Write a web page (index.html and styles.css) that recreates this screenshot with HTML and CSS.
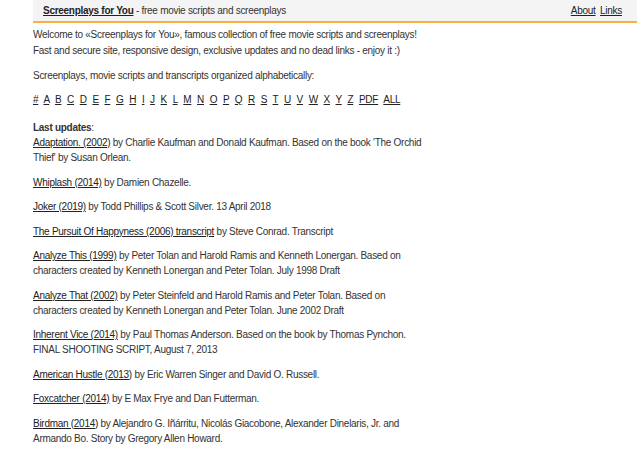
FILE: index.html
```html
<!DOCTYPE html>
<html>
<head>
<meta charset="utf-8">
<link rel="stylesheet" href="styles.css">
</head>
<body>
<div class="page">
  <header class="topbar">
    <div class="brand"><a class="brand-link" href="#">Screenplays for You</a> - free movie scripts and screenplays</div>
    <nav class="toplinks"><a href="#">About</a> <a href="#">Links</a></nav>
  </header>
  <main class="content">
    <p class="intro">Welcome to «Screenplays for You», famous collection of free movie scripts and screenplays!<br>Fast and secure site, responsive design, exclusive updates and no dead links - enjoy it :)</p>
    <p>Screenplays, movie scripts and transcripts organized alphabetically:</p>
    <p class="alpha"><a href="#">#</a> <a href="#">A</a> <a href="#">B</a> <a href="#">C</a> <a href="#">D</a> <a href="#">E</a> <a href="#">F</a> <a href="#">G</a> <a href="#">H</a> <a href="#">I</a> <a href="#">J</a> <a href="#">K</a> <a href="#">L</a> <a href="#">M</a> <a href="#">N</a> <a href="#">O</a> <a href="#">P</a> <a href="#">Q</a> <a href="#">R</a> <a href="#">S</a> <a href="#">T</a> <a href="#">U</a> <a href="#">V</a> <a href="#">W</a> <a href="#">X</a> <a href="#">Y</a> <a href="#">Z</a> <a href="#">PDF</a> <a href="#">ALL</a></p>
    <div class="updates">
      <div class="updates-title"><b>Last updates</b>:</div>
      <p class="first"><a href="#">Adaptation. (2002)</a> by Charlie Kaufman and Donald Kaufman. Based on the book 'The Orchid Thief' by Susan Orlean.</p>
      <p><a href="#">Whiplash (2014)</a> by Damien Chazelle.</p>
      <p><a href="#">Joker (2019)</a> by Todd Phillips &amp; Scott Silver. 13 April 2018</p>
      <p><a href="#">The Pursuit Of Happyness (2006) transcript</a> by Steve Conrad. Transcript</p>
      <p><a href="#">Analyze This (1999)</a> by Peter Tolan and Harold Ramis and Kenneth Lonergan. Based on characters created by Kenneth Lonergan and Peter Tolan. July 1998 Draft</p>
      <p><a href="#">Analyze That (2002)</a> by Peter Steinfeld and Harold Ramis and Peter Tolan. Based on characters created by Kenneth Lonergan and Peter Tolan. June 2002 Draft</p>
      <p><a href="#">Inherent Vice (2014)</a> by Paul Thomas Anderson. Based on the book by Thomas Pynchon. FINAL SHOOTING SCRIPT, August 7, 2013</p>
      <p><a href="#">American Hustle (2013)</a> by Eric Warren Singer and David O. Russell.</p>
      <p><a href="#">Foxcatcher (2014)</a> by E Max Frye and Dan Futterman.</p>
      <p><a href="#">Birdman (2014)</a> by Alejandro G. Iñárritu, Nicolás Giacobone, Alexander Dinelaris, Jr. and Armando Bo. Story by Gregory Allen Howard.</p>
    </div>
  </main>
</div>
</body>
</html>
```
FILE: styles.css
```css
html, body {
  margin: 0;
  padding: 0;
  background: #fff;
}
body {
  font-family: "Liberation Sans", Arial, sans-serif;
  font-size: 10px;
  letter-spacing: -0.28px;
  line-height: 15px;
  color: #333;
}
a {
  color: #222;
  text-decoration: underline;
}
.page {
  padding: 0 4px 0 33px;
}
.topbar {
  display: flex;
  justify-content: space-between;
  align-items: center;
  background: #f4f4f4;
  border-bottom: 2px solid #fbb040;
  height: 21px;
  padding: 0 15px 0 10px;
}
.brand-link {
  font-weight: bold;
}
.toplinks a {
  margin-left: 2px;
}
.content {
  width: 392px;
  padding-top: 4px;
}
.content p {
  margin: 0 0 9px 0;
}
.intro {
  line-height: 16px;
}
.alpha {
  word-spacing: 3.2px;
}
.updates {
  padding-top: 4px;
}
.updates-title {
  margin: 0;
}
.updates p {
  margin: 0 0 9.5px 0;
}
```
